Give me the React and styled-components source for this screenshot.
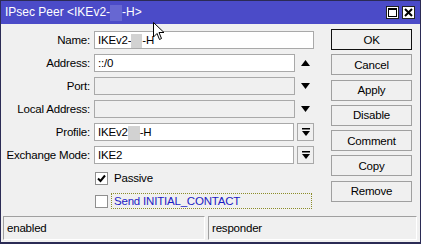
import React from 'react'
import styled, { createGlobalStyle } from 'styled-components'

const Global = createGlobalStyle`
  body {
    margin: 0;
    background: #ffffff;
    font-family: 'Liberation Sans', Arial, sans-serif;
    font-size: 11.5px;
    letter-spacing: -0.2px;
  }
`

const Window = styled.div`
  position: relative;
  width: 421px;
  height: 244px;
  box-sizing: border-box;
  border: 1px solid #2b2b55;
  border-bottom-width: 2px;
  background: #f0f0f0;
  display: flex;
  flex-direction: column;
  color: #000;
`

const TitleBar = styled.div`
  height: 23px;
  flex: none;
  background: #4b4bc8;
  color: #fff;
  display: flex;
  align-items: center;
  justify-content: space-between;
  padding: 0 5px 0 4px;
  font-size: 12px;
  letter-spacing: 0;
`

const Blur = styled.span`
  display: inline-block;
  width: ${p => p.w || 10}px;
  height: ${p => p.h || 14}px;
  vertical-align: middle;
  background: ${p => p.bg};
`

const TitleButtons = styled.div`
  display: flex;
  gap: 3px;
`

const TitleBtn = styled.div`
  width: 13px;
  height: 13px;
  box-sizing: border-box;
  background: #fff;
  border: 1px solid #222;
  display: flex;
  align-items: center;
  justify-content: center;
`

const Body = styled.div`
  flex: 1;
  display: flex;
`

const Form = styled.div`
  width: 313px;
  padding-top: 7px;
  display: grid;
  grid-template-columns: 89px 1fr;
  grid-auto-rows: 18px;
  column-gap: 4px;
  row-gap: 5px;
  align-content: start;
`

const Label = styled.div`
  text-align: right;
  line-height: 18px;
  white-space: nowrap;
`

const FieldRow = styled.div`
  display: flex;
  align-items: center;
  gap: 2px;
`

const Input = styled.div`
  flex: 1;
  height: 18px;
  box-sizing: border-box;
  border: 1px solid #a9a9a9;
  background: ${p => (p.disabled ? '#f0f0f0' : '#fff')};
  padding-left: 3px;
  line-height: 16px;
  white-space: nowrap;
`

const Trail = styled.div`
  width: 17px;
  height: 18px;
  flex: none;
  display: flex;
  align-items: center;
  justify-content: center;
`

const DropBtn = styled(Trail)`
  box-sizing: border-box;
  border: 1px solid #a9a9a9;
  background: #f0f0f0;
  margin-left: 1px;
`

const CheckRow = styled.div`
  grid-column: 2;
  display: flex;
  align-items: center;
  gap: 3px;
`

const Box = styled.div`
  width: 13px;
  height: 13px;
  box-sizing: border-box;
  border: 1px solid #8f8f8f;
  background: #fff;
  display: flex;
  align-items: center;
  justify-content: center;
  flex: none;
  margin-left: 1px;
`

const CheckText = styled.div`
  line-height: 14px;
  padding: 0 2px;
  color: ${p => (p.focus ? '#1c1cc4' : '#000')};
  border: 1px dotted ${p => (p.focus ? '#8c8c28' : 'transparent')};
  flex: ${p => (p.focus ? 1 : 'none')};
  margin-right: 2px;
`

const Buttons = styled.div`
  margin-left: 17px;
  padding-top: 5px;
  display: flex;
  flex-direction: column;
  gap: 4.3px;
`

const Button = styled.div`
  width: 81px;
  height: 21px;
  box-sizing: border-box;
  border: 1px solid ${p => (p.primary ? '#101010' : '#a0a0a0')};
  background: #f0f0f0;
  display: flex;
  align-items: center;
  justify-content: center;
`

const StatusBar = styled.div`
  height: 24px;
  flex: none;
  display: flex;
  gap: 3px;
  padding: 0 3px 2px 2px;
`

const Panel = styled.div`
  flex: ${p => p.grow};
  box-sizing: border-box;
  border: 1px solid;
  border-color: #a0a0a0 #ffffff #ffffff #a0a0a0;
  display: flex;
  align-items: center;
  padding-left: 3px;
`

const Cursor = styled.svg`
  position: absolute;
  left: 152px;
  top: 21px;
`

const Up = () => (
  <svg width="9" height="6" viewBox="0 0 9 6"><path d="M0 6 L4.5 0 L9 6 Z" fill="#000" /></svg>
)
const Down = () => (
  <svg width="9" height="6" viewBox="0 0 9 6"><path d="M0 0 L4.5 6 L9 0 Z" fill="#000" /></svg>
)
const DropIcon = () => (
  <svg width="8" height="8" viewBox="0 0 8 8">
    <rect x="0" y="0" width="8" height="1.5" fill="#000" />
    <path d="M0 3 L4 8 L8 3 Z" fill="#000" />
  </svg>
)

const Check = () => (
  <svg width="9" height="9" viewBox="0 0 9 9">
    <path d="M1 4.5 L3.5 7 L8 1.5" stroke="#000" strokeWidth="2" fill="none" />
  </svg>
)

export default function App() {
  return (
    <>
      <Global />
      <Window>
        <TitleBar>
          <span>
            IPsec Peer &lt;IKEv2-<Blur bg="#6767d2" w={12} h={16} />-H&gt;
          </span>
          <TitleButtons>
            <TitleBtn>
              <svg width="9" height="9" viewBox="0 0 9 9">
                <rect x="0.5" y="0.5" width="8" height="8" fill="none" stroke="#000" />
                <rect x="0.5" y="0.5" width="8" height="1.5" fill="#000" />
              </svg>
            </TitleBtn>
            <TitleBtn>
              <svg width="9" height="9" viewBox="0 0 9 9">
                <path d="M1 1 L8 8 M8 1 L1 8" stroke="#000" strokeWidth="2" />
              </svg>
            </TitleBtn>
          </TitleButtons>
        </TitleBar>
        <Body>
          <Form>
            <Label>Name:</Label>
            <FieldRow>
              <Input>IKEv2-<Blur bg="#d2d2d2" w={11} />-H</Input>
            </FieldRow>
            <Label>Address:</Label>
            <FieldRow>
              <Input>::/0</Input>
              <Trail><Up /></Trail>
            </FieldRow>
            <Label>Port:</Label>
            <FieldRow>
              <Input disabled />
              <Trail><Down /></Trail>
            </FieldRow>
            <Label>Local Address:</Label>
            <FieldRow>
              <Input disabled />
              <Trail><Down /></Trail>
            </FieldRow>
            <Label>Profile:</Label>
            <FieldRow>
              <Input>IKEv2<Blur bg="#d2d2d2" w={12} />-H</Input>
              <DropBtn><DropIcon /></DropBtn>
            </FieldRow>
            <Label>Exchange Mode:</Label>
            <FieldRow>
              <Input>IKE2</Input>
              <DropBtn><DropIcon /></DropBtn>
            </FieldRow>
            <CheckRow>
              <Box><Check /></Box>
              <CheckText>Passive</CheckText>
            </CheckRow>
            <CheckRow>
              <Box />
              <CheckText focus>Send INITIAL_CONTACT</CheckText>
            </CheckRow>
          </Form>
          <Buttons>
            <Button primary>OK</Button>
            <Button>Cancel</Button>
            <Button>Apply</Button>
            <Button>Disable</Button>
            <Button>Comment</Button>
            <Button>Copy</Button>
            <Button>Remove</Button>
          </Buttons>
        </Body>
        <StatusBar>
          <Panel grow="0 0 202px">enabled</Panel>
          <Panel grow="1">responder</Panel>
        </StatusBar>
        <Cursor width="12" height="19" viewBox="0 0 12 19">
          <path d="M0.5 0.5 L0.5 15 L4 11.5 L6.5 17.5 L8.5 16.5 L6 10.5 L11 10.5 Z" fill="#fff" stroke="#000" />
        </Cursor>
      </Window>
    </>
  )
}
